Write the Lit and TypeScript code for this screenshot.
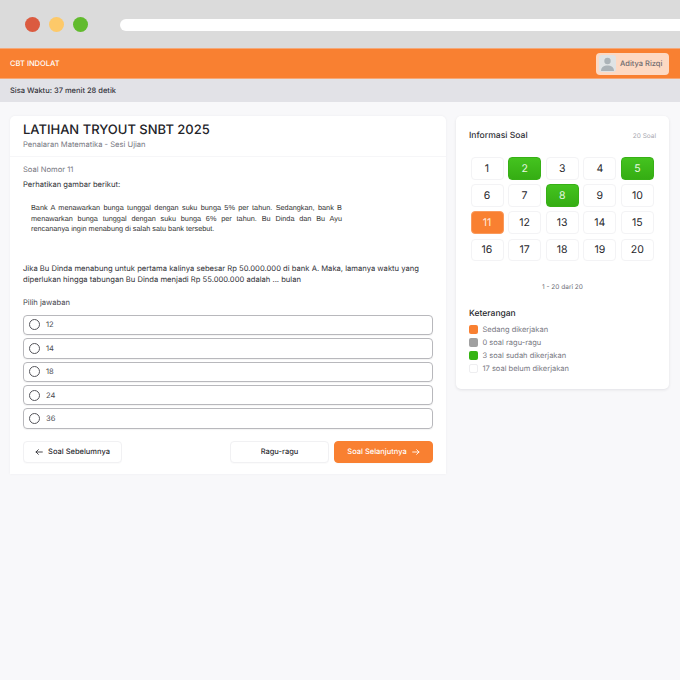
import { LitElement, html, css } from "lit";
import { customElement } from "lit/decorators.js";

const DONE = [2, 5, 8];
const CURRENT = 11;
const OPTIONS = ["12", "14", "18", "24", "36"];

@customElement("app-root")
export class AppRoot extends LitElement {
  static styles = css`
    :host { display: block; width: 680px; height: 680px; background: #f8f8fa; font-family: Inter, "Liberation Sans", sans-serif; color: #25252b; overflow: hidden; text-rendering: geometricPrecision; }
    * { box-sizing: border-box; }
    .chrome { height: 48px; background: #dbdbdb; display: flex; align-items: center; padding: 0 0 0 25px; gap: 9px; }
    .dot { width: 15px; height: 15px; border-radius: 50%; }
    .url { flex: 1; height: 12px; margin: 2px 0 0 23px; background: #fff; border-radius: 6px 0 0 6px; }
    .top { height: 31px; background: #f98031; border-top: 1px solid #f5a878; border-bottom: 1px solid #f5a878; display: flex; align-items: center; justify-content: space-between; padding: 0 11px 0 10px; }
    .brand { color: #fff; font-size: 7.5px; font-weight: 500; }
    .user { display: flex; align-items: center; gap: 4px; height: 22px; width: 73px; padding: 0 6px 0 3px; border-radius: 4px; background: #fdd9c3; color: #6f6a6e; font-size: 7.5px; font-weight: 500; white-space: nowrap; }
    .avatar { width: 17px; height: 17px; border-radius: 3px; background: #dfe3e5; flex: none; display: block; }
    .timer { height: 23px; background: #e2e2e7; display: flex; align-items: center; padding: 0 10px; font-size: 7.5px; font-weight: 500; color: #33333a; }
    .main { display: flex; align-items: flex-start; gap: 10px; padding: 14px 11px 0 10px; }
    .card { background: #fff; border-radius: 5px; }
    .q { width: 436px; height: 358px; border-radius: 5px 5px 0 0; box-shadow: 0 0 3px rgba(30,30,50,.05); display: flex; flex-direction: column; }
    .q-head { height: 41px; padding: 6px 13px 0; border-bottom: 1px solid #f6f6f8; }
    h1 { margin: 0; font-size: 13px; line-height: 17px; font-weight: 500; color: #232328; }
    .sub { font-size: 7.6px; line-height: 11px; margin-top: 0; color: #77777f; }
    .q-body { padding: 7px 13px 0; display: flex; flex-direction: column; }
    .num { font-size: 7.6px; line-height: 12px; color: #77777f; }
    .lead { font-size: 7.6px; line-height: 12px; margin-top: 3px; color: #303036; }
    .passage { width: 311px; margin: 12px 0 0 8px; font: 7.3px/10.6px "Liberation Sans", Arial, sans-serif; color: #333; text-align: justify; }
    .para { font-size: 7.63px; line-height: 11.5px; margin-top: 28px; color: #303036; }
    .pick { font-size: 7.6px; line-height: 12px; margin-top: 11px; color: #48484f; }
    .opts { display: flex; flex-direction: column; gap: 3px; margin-top: 6px; }
    .opt { height: 20.4px; border: 1px solid #b8b8bc; border-radius: 4px; box-shadow: 0 1px 1px rgba(0,0,0,.05); display: flex; align-items: center; padding-left: 5px; gap: 6px; font-size: 7.6px; color: #4a4a50; }
    .radio { width: 11px; height: 11px; border: 1px solid #55555b; border-radius: 50%; flex: none; }
    .actions { display: flex; margin-top: 12px; gap: 5px; }
    .btn { flex: none; width: 99px; height: 22px; border: 1px solid #f1f1f3; border-radius: 4px; background: #fff; display: flex; align-items: center; justify-content: center; gap: 5px; font: 500 7.5px Inter, sans-serif; color: #2d2d33; padding: 0; box-shadow: 0 1px 1px rgba(0,0,0,.02); text-rendering: geometricPrecision; }
    .doubt { margin-left: auto; }
    .next { background: #f98031; border-color: #f98031; color: #fff; }
    .side { width: 213px; height: 273px; box-shadow: 0 1px 3px rgba(30,30,50,.1); padding: 14px 13px 0; }
    .side-head { display: flex; justify-content: space-between; align-items: center; height: 12px; }
    .side-title { font-size: 8.6px; font-weight: 500; color: #303036; }
    .count { font-size: 6.5px; color: #a8a8b0; }
    .grid { display: grid; grid-template-columns: repeat(5, 33px); column-gap: 4.6px; row-gap: 4.5px; margin: 15px 0 0 1.5px; }
    .cell { height: 22.7px; border: 1px solid #f3f3f5; border-radius: 4px; display: flex; align-items: center; justify-content: center; font-size: 10.5px; color: #27272c; background: #fff; }
    .cell.done { background: linear-gradient(#44c31f, #35ad13); border-color: #37b016; color: #e8f8e2; }
    .cell.cur { background: #f98031; border-color: #fa9a5c; color: #ffe9dc; }
    .pager { text-align: center; font-size: 6.5px; color: #6e6e76; margin-top: 21px; line-height: 10px; }
    .legend-title { font-size: 8.5px; font-weight: 500; color: #27272c; margin-top: 16px; line-height: 12px; }
    .legend { display: flex; flex-direction: column; gap: 4px; margin-top: 5px; }
    .row { display: flex; align-items: center; gap: 4.5px; height: 9px; font-size: 7.5px; color: #77777f; white-space: nowrap; }
    .sw { width: 9px; height: 9px; border-radius: 2px; flex: none; }
  `;

  private arrow(dir: "l" | "r") {
    const d = dir === "l" ? "M11 6H1.5M5 2.5 1.5 6 5 9.5" : "M1 6h9.5M7 2.5 10.5 6 7 9.5";
    return html`<svg width="8" height="8" viewBox="0 0 12 12" fill="none" stroke="currentColor" stroke-width="1.3" stroke-linecap="round" stroke-linejoin="round"><path d=${d}></path></svg>`;
  }

  render() {
    const nums = Array.from({ length: 20 }, (_, i) => i + 1);
    return html`
      <div class="chrome">
        <span class="dot" style="background:#db5b40"></span>
        <span class="dot" style="background:#fdc969"></span>
        <span class="dot" style="background:#62bb2e"></span>
        <div class="url"></div>
      </div>
      <div class="top">
        <span class="brand">CBT INDOLAT</span>
        <div class="user">
          <svg class="avatar" viewBox="0 0 17 17"><circle cx="8.5" cy="6" r="3.2" fill="#abb3b8"></circle><path d="M2 16c0-4 3-5.6 6.5-5.6S15 12 15 16z" fill="#abb3b8"></path></svg>
          <span>Aditya Rizqi</span>
        </div>
      </div>
      <div class="timer">Sisa Waktu: 37 menit 28 detik</div>
      <div class="main">
        <section class="card q">
          <div class="q-head">
            <h1>LATIHAN TRYOUT SNBT 2025</h1>
            <div class="sub">Penalaran Matematika - Sesi Ujian</div>
          </div>
          <div class="q-body">
            <div class="num">Soal Nomor 11</div>
            <div class="lead">Perhatikan gambar berikut:</div>
            <div class="passage">Bank A menawarkan bunga tunggal dengan suku bunga 5% per tahun. Sedangkan, bank B menawarkan bunga tunggal dengan suku bunga 6% per tahun. Bu Dinda dan Bu Ayu rencananya ingin menabung di salah satu bank tersebut.</div>
            <div class="para">Jika Bu Dinda menabung untuk pertama kalinya sebesar Rp 50.000.000 di bank A. Maka, lamanya waktu yang diperlukan hingga tabungan Bu Dinda menjadi Rp 55.000.000 adalah ... bulan</div>
            <div class="pick">Pilih jawaban</div>
            <div class="opts">
              ${OPTIONS.map((o) => html`<div class="opt"><span class="radio"></span>${o}</div>`)}
            </div>
            <div class="actions">
              <button class="btn">${this.arrow("l")}Soal Sebelumnya</button>
              <button class="btn doubt">Ragu-ragu</button>
              <button class="btn next">Soal Selanjutnya ${this.arrow("r")}</button>
            </div>
          </div>
        </section>
        <aside class="card side">
          <div class="side-head"><span class="side-title">Informasi Soal</span><span class="count">20 Soal</span></div>
          <div class="grid">
            ${nums.map((n) => html`<div class="cell ${DONE.includes(n) ? "done" : n === CURRENT ? "cur" : ""}">${n}</div>`)}
          </div>
          <div class="pager">1 - 20 dari 20</div>
          <div class="legend-title">Keterangan</div>
          <div class="legend">
            <div class="row"><span class="sw" style="background:#f98031"></span>Sedang dikerjakan</div>
            <div class="row"><span class="sw" style="background:#a0a0a0"></span>0 soal ragu-ragu</div>
            <div class="row"><span class="sw" style="background:#36b414"></span>3 soal sudah dikerjakan</div>
            <div class="row"><span class="sw" style="background:#fff;border:1px solid #eeeef0"></span>17 soal belum dikerjakan</div>
          </div>
        </aside>
      </div>
    `;
  }
}
